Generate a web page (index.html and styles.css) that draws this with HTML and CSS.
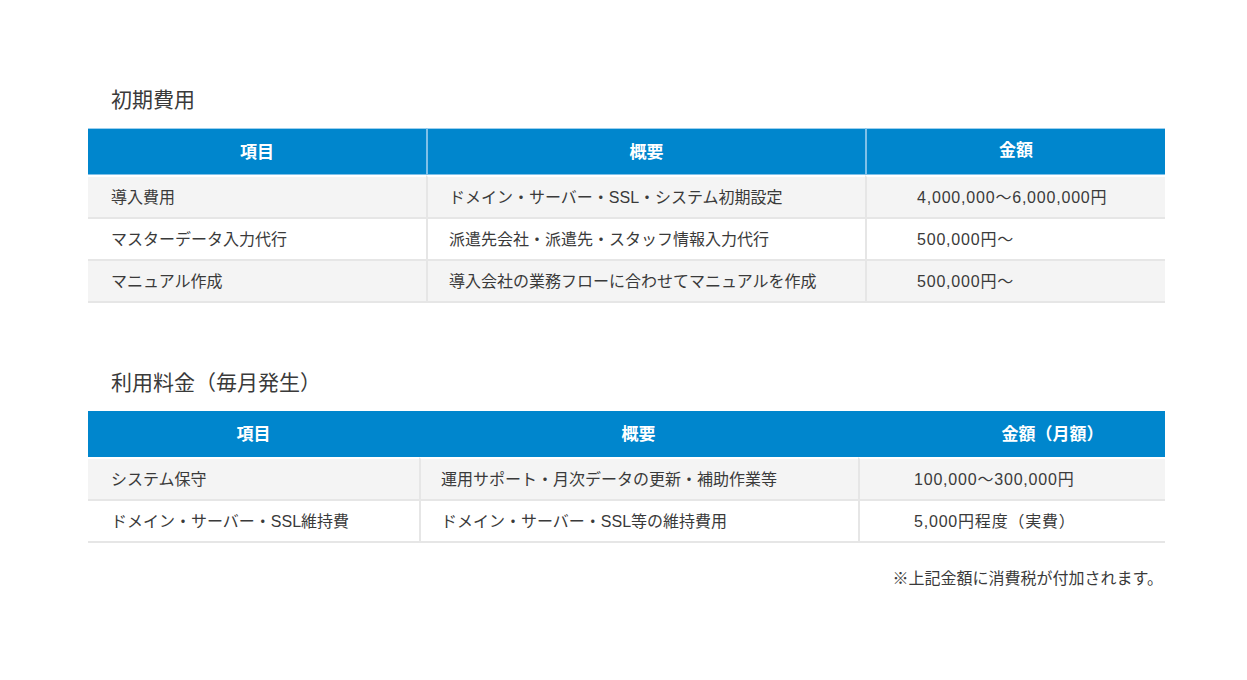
FILE: index.html
```html
<!DOCTYPE html>
<html lang="ja">
<head>
<meta charset="utf-8">
<title>料金</title>
<link rel="stylesheet" href="styles.css">
</head>
<body>
<div class="page">
  <h2 class="section-title">初期費用</h2>
  <table class="price-table t1">
    <colgroup><col class="c1"><col class="c2"><col class="c3"></colgroup>
    <thead>
      <tr><th>項目</th><th>概要</th><th class="amount-h">金額</th></tr>
    </thead>
    <tbody>
      <tr><td>導入費用</td><td class="desc">ドメイン・サーバー・SSL・システム初期設定</td><td class="amount">4,000,000〜6,000,000円</td></tr>
      <tr><td>マスターデータ入力代行</td><td class="desc">派遣先会社・派遣先・スタッフ情報入力代行</td><td class="amount">500,000円〜</td></tr>
      <tr><td>マニュアル作成</td><td class="desc">導入会社の業務フローに合わせてマニュアルを作成</td><td class="amount">500,000円〜</td></tr>
    </tbody>
  </table>

  <h2 class="section-title second">利用料金（毎月発生）</h2>
  <table class="price-table t2">
    <colgroup><col class="c1"><col class="c2"><col class="c3"></colgroup>
    <thead>
      <tr><th>項目</th><th>概要</th><th class="amount-h">金額（月額）</th></tr>
    </thead>
    <tbody>
      <tr><td>システム保守</td><td class="desc">運用サポート・月次データの更新・補助作業等</td><td class="amount">100,000〜300,000円</td></tr>
      <tr><td>ドメイン・サーバー・SSL維持費</td><td class="desc">ドメイン・サーバー・SSL等の維持費用</td><td class="amount">5,000円程度（実費）</td></tr>
    </tbody>
  </table>
  <p class="note">※上記金額に消費税が付加されます。</p>
</div>
</body>
</html>
```

FILE: styles.css
```css
html, body {
  margin: 0;
  padding: 0;
  background: #fff;
}
body {
  font-family: "Liberation Sans", "Noto Sans CJK JP", sans-serif;
  color: #3a3a3a;
}
.page {
  width: 1077px;
  margin-left: 88px;
  padding-top: 85px;
}
.section-title {
  margin: 0 0 13px 0;
  padding-left: 23px;
  font-size: 21px;
  line-height: 30px;
  font-weight: normal;
  color: #3a3a3a;
}
.section-title.second {
  margin-top: 65px;
}
.price-table {
  width: 1077px;
  table-layout: fixed;
  border-collapse: separate;
  border-spacing: 0;
  font-size: 16px;
}
.t1 .c1 { width: 338px; }
.t1 .c2 { width: 439px; }
.t1 .c3 { width: 300px; }
.t2 .c1 { width: 331px; }
.t2 .c2 { width: 439px; }
.t2 .c3 { width: 307px; }

.price-table th {
  background: #0086cd;
  color: #fff;
  font-weight: bold;
  font-size: 17px;
  line-height: 20px;
  padding: 14px 0 11px;
  text-align: center;
  border-top: 1px solid #9ccfee;
  border-bottom: 1px solid #7fc0e8;
}
.t1 th + th {
  border-left: 2px solid #7fc0e8;
}
.t1 .amount-h {
  padding-top: 12px;
  padding-bottom: 13px;
}
.t2 th {
  border-top: 0;
  border-bottom: 0;
  padding-bottom: 12px;
}
.t2 .amount-h {
  padding-left: 82px;
}
.price-table td {
  padding: 11px 0 9px 23px;
  line-height: 20px;
  border-bottom: 2px solid #e6e6e6;
  vertical-align: middle;
  white-space: nowrap;
}
.price-table td + td {
  border-left: 2px solid #e6e6e6;
}
.price-table tbody tr:nth-child(odd) td {
  background: #f4f4f4;
}
.price-table tbody tr:first-child td {
  border-top: 2px solid #fff;
}
.t1 td.desc { padding-left: 21px; }
.t1 td.amount { padding-left: 50px; letter-spacing: 0.8px; }
.t2 td.desc { padding-left: 20px; }
.t2 td.amount { padding-left: 54px; letter-spacing: 0.8px; }

.note {
  margin: 25px 0 0;
  text-align: right;
  font-size: 16px;
  line-height: 22px;
  padding-right: 2px;
  color: #3a3a3a;
}
```
